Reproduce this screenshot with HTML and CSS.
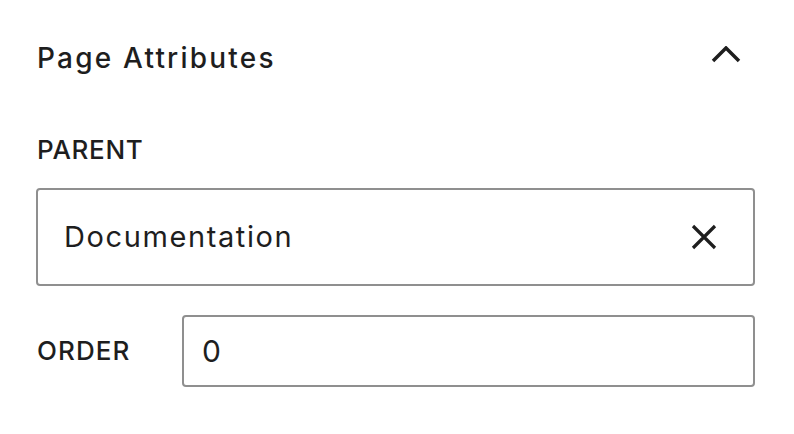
FILE: index.html
```html
<!DOCTYPE html>
<html>
<head>
<meta charset="utf-8">
<link rel="stylesheet" href="styles.css">
</head>
<body>
<div class="panel">
  <div class="header">
    <h2 class="title">Page Attributes</h2>
    <svg class="chevron" width="30" height="18" viewBox="0 0 30 18"><path d="M2 15 L15 2 L28 15" fill="none" stroke="#1e1e1e" stroke-width="3.5"/></svg>
  </div>
  <div class="label parent-label">PARENT</div>
  <div class="combo">
    <span class="combo-value">Documentation</span>
    <svg class="clear" width="28" height="28" viewBox="0 0 28 28"><path d="M3 3 L25 25 M25 3 L3 25" fill="none" stroke="#1e1e1e" stroke-width="3.2"/></svg>
  </div>
  <div class="order-row">
    <div class="label order-label">ORDER</div>
    <div class="order-input">0</div>
  </div>
</div>
</body>
</html>
```

FILE: styles.css
```css
html, body {
  margin: 0;
  padding: 0;
  background: #fff;
}
body {
  font-family: Inter, "Noto Sans", sans-serif;
  color: #1e1e1e;
}
.panel {
  padding: 0 39px 0 36px;
}
.header {
  height: 118px;
  display: flex;
  align-items: center;
  justify-content: space-between;
}
.title {
  margin: -3px 0 0 1px;
  font-size: 28px;
  font-weight: 500;
  line-height: 32px;
  letter-spacing: 2.2px;
}
.chevron {
  margin-right: 14px;
  margin-top: -8px;
}
.label {
  font-size: 26px;
  font-weight: 500;
  line-height: 24px;
  letter-spacing: 0.7px;
  text-transform: uppercase;
  margin-left: 1px;
}
.parent-label {
  margin-top: 20px;
}
.combo {
  margin-top: 26px;
  height: 98px;
  box-sizing: border-box;
  border: 2px solid #8f8f8f;
  border-radius: 4px;
  display: flex;
  align-items: center;
  justify-content: space-between;
  padding: 0 35px 0 26px;
}
.combo-value {
  font-size: 29px;
  line-height: 36px;
  letter-spacing: 1.6px;
  color: #1e1e1e;
}
.order-row {
  margin-top: 29px;
  display: flex;
  align-items: center;
}
.order-label {
  width: 145px;
  letter-spacing: 1.1px;
}
.order-input {
  flex: 1;
  height: 72px;
  box-sizing: border-box;
  border: 2px solid #8f8f8f;
  border-radius: 4px;
  display: flex;
  align-items: center;
  padding-left: 18px;
  font-size: 30px;
}
```
